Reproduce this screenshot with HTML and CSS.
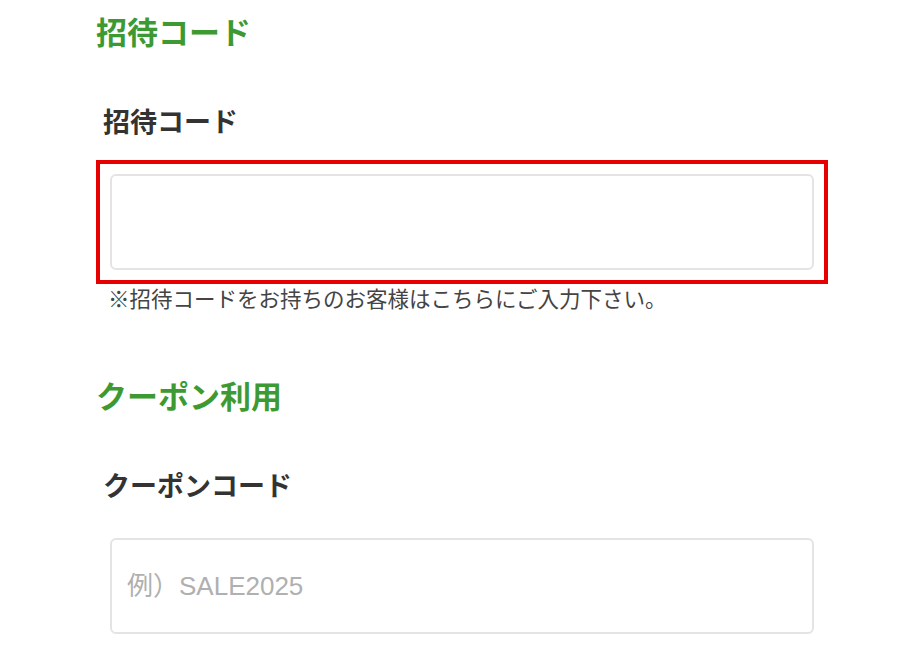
FILE: index.html
```html
<!DOCTYPE html>
<html lang="ja">

<head>
    <meta charset="UTF-8">
    <meta name="viewport" content="width=device-width, initial-scale=1.0">
    <link rel="stylesheet" href="styles.css">
</head>

<body>
    <div class="page">
        <section class="block">
            <h2 class="section-title">招待コード</h2>
            <div class="field">
                <label class="field-label label-tight" for="inviteCode">招待コード</label>
                <div class="highlight-frame">
                    <input type="text" id="inviteCode" class="field-input">
                </div>
                <p class="field-note">※招待コードをお持ちのお客様はこちらにご入力下さい。</p>
            </div>
        </section>

        <section class="block block-coupon">
            <h2 class="section-title">クーポン利用</h2>
            <div class="field">
                <label class="field-label" for="couponCode">クーポンコード</label>
                <input type="text" id="couponCode" class="field-input" placeholder="例）SALE2025">
            </div>
        </section>
    </div>
</body>

</html>
```

FILE: styles.css
```css
/* Page base */
body {
    margin: 0;
    background: #fff;
    font-family: "Noto Sans CJK JP", "Liberation Sans", sans-serif;
    color: #333;
}

.page {
    width: 732px;
    padding: 13px 0 0 96px;
}

/* Green section headings */
.section-title {
    margin: 0;
    font-size: 31px;
    line-height: 36px;
    font-weight: bold;
    color: #3d9a33;
}

.block-coupon {
    margin-top: 66px;
}

/* Form fields */
.field {
    padding-left: 14px;
    width: 704px;
}

.field-label {
    display: block;
    margin: 56px 0 37px -7px;
    font-size: 27px;
    line-height: 32px;
    font-weight: bold;
    color: #333;
}

.label-tight {
    margin-bottom: 23px;
}

/* Red annotation frame around the invite input */
.highlight-frame {
    margin-left: -14px;
    width: 704px;
    padding: 10px;
    border: 4px solid #e60000;
}

.field-input {
    display: block;
    box-sizing: border-box;
    width: 704px;
    height: 96px;
    margin: 0;
    padding: 0 15px;
    border: 2px solid #e4e4e4;
    border-radius: 6px;
    background: #fff;
    font-family: "Liberation Sans", "Noto Sans CJK JP", sans-serif;
    font-size: 26px;
    color: #333;
}

.field-input::placeholder {
    color: #b0b0b0;
}

.field-note {
    margin: 1px 0 0 -2px;
    font-size: 21.5px;
    line-height: 26px;
    color: #444;
}
```
